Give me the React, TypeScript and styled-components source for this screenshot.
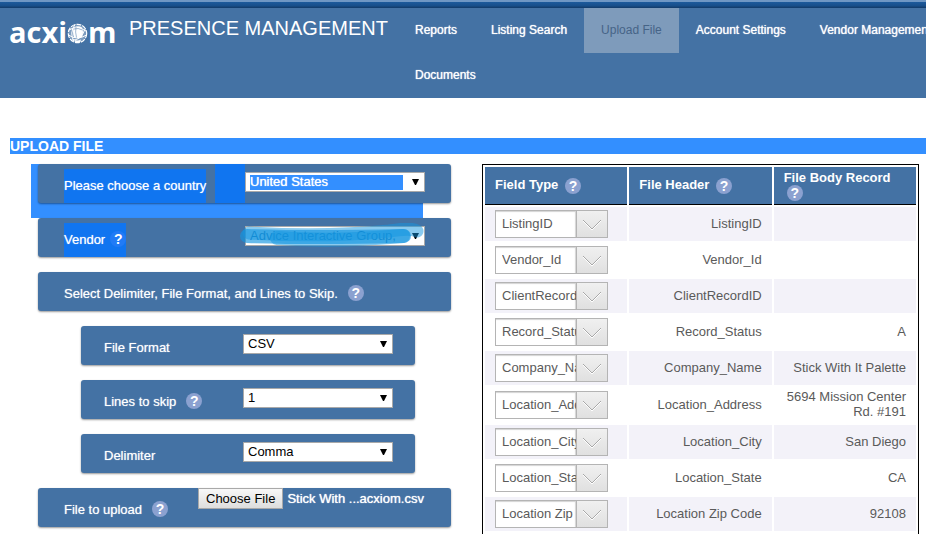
import React, { useId, useRef } from "react";
import styled, { createGlobalStyle, css } from "styled-components";

const BLUE = "#4472a4";
const SELECTION = "#338fff";
const SELECTION_ON_PANEL = "#1075f0";

const GlobalStyle = createGlobalStyle`
  *, *::before, *::after { box-sizing: border-box; }
  body {
    margin: 0;
    background: #fff;
    color: #5a5a5a;
    font: 13px/15px "Liberation Sans", Arial, sans-serif;
    overflow-x: hidden;
  }
  button, input, select { font: inherit; }
`;

/* ---------- Header ---------- */

const TopBar = styled.div`
  height: 8px;
  border-top: 2px solid #6f97c4;
  background: linear-gradient(#1c5a9c, #184f8b 60%, #123a68);
`;

const Header = styled.header`
  display: flex;
  align-items: flex-start;
  background: ${BLUE};
  color: #fff;
  overflow: hidden;
`;

const Brand = styled.a`
  display: flex;
  flex: 0 0 398px;
  padding: 8px 0 0 9px;
  color: #fff;
  text-decoration: none;
`;

const Logo = styled.span`
  display: flex;
  width: 120px;
  font: 700 29px/32px "Open Sans", "Noto Sans", sans-serif;

  svg {
    margin: 7px 0 0;
    flex: none;
  }
`;

const ProductName = styled.span`
  font-size: 20px;
  line-height: 24px;
  white-space: nowrap;
`;

const Nav = styled.nav`
  display: flex;
  flex-wrap: wrap;
  flex: 1 0 560px;
`;

const NavLink = styled.a<{ $active?: boolean }>`
  padding: 0 17px;
  font-size: 12px;
  line-height: 45px;
  white-space: nowrap;
  text-decoration: none;
  color: #fff;
  text-shadow: 0 0 1px #fff;
  ${(p) =>
    p.$active &&
    css`
      background: #7e9bbb;
      color: #466487;
      text-shadow: none;
    `}
`;

/* ---------- Page ---------- */

const Main = styled.main`
  padding: 40px 0 0 10px;
`;

const Title = styled.h1`
  margin: 0 0 10px;
  background: ${SELECTION};
  color: #fff;
  font-size: 14px;
  line-height: 16px;
`;

const Columns = styled.div`
  display: grid;
  grid-template-columns: minmax(0, 441fr) minmax(0, 437fr);
  column-gap: 31px;
  padding-right: 7px;
`;

const Form = styled.form`
  padding-left: 21px;
`;

const Row = styled.div<{ $nested?: boolean; $selected?: boolean }>`
  padding: ${(p) => (p.$nested ? "0 36px 15px 50px" : "0 0 15px 7px")};
  ${(p) =>
    p.$selected &&
    css`
      background: linear-gradient(${SELECTION}, ${SELECTION}) no-repeat left top /
        calc(100% - 28px) 100%;
    `}
`;

const Panel = styled.div<{ $nested?: boolean }>`
  display: flex;
  align-items: stretch;
  min-height: 39px;
  padding-left: ${(p) => (p.$nested ? 23 : 26)}px;
  border-radius: 3px;
  background: ${BLUE};
  box-shadow: 0 1px 2px rgba(0, 0, 0, 0.4);
  color: #fff;
`;

const LabelCell = styled.div<{ $width?: number }>`
  flex: ${(p) => (p.$width ? `0 0 ${p.$width}px` : "1")};
  display: flex;
  padding-top: 5px;
`;

const LabelText = styled.label<{ $selected?: boolean }>`
  display: flex;
  align-items: center;
  padding-bottom: 2px;
  white-space: nowrap;
  text-shadow: 0 0 1px rgba(255, 255, 255, 0.7);
  ${(p) =>
    p.$selected &&
    css`
      background: ${SELECTION_ON_PANEL};
    `}
`;

const ControlCell = styled.div<{ $selected?: boolean; $nested?: boolean }>`
  flex: 1;
  padding: 8px ${(p) => (p.$nested ? 22 : 26)}px 0 0;
  ${(p) =>
    !p.$nested &&
    css`
      padding-left: 30px;
    `}
  ${(p) =>
    p.$selected &&
    css`
      background: linear-gradient(${SELECTION_ON_PANEL}, ${SELECTION_ON_PANEL})
        no-repeat left top / 30px 100%;
    `}
`;

type HelpGap = "small" | "medium" | "large";
const HELP_GAPS: Record<HelpGap, number> = { small: 3, medium: 5, large: 10 };

const HelpButton = styled.button<{ $gap: HelpGap; $selected?: boolean }>`
  width: 16px;
  height: 16px;
  margin: 0 0 0 ${(p) => HELP_GAPS[p.$gap]}px;
  padding: 0;
  border: 0;
  border-radius: 50%;
  background: ${(p) => (p.$selected ? "#217bf6" : "#8ba1d0")};
  color: #fff;
  font-size: 14px;
  font-weight: bold;
  line-height: 16px;
  text-align: center;
  vertical-align: middle;
`;

const SelectBox = styled.div`
  position: relative;
  height: 20px;
`;

const NativeSelect = styled.select<{ $selected?: boolean; $muted?: boolean }>`
  appearance: none;
  display: block;
  width: 100%;
  height: 20px;
  padding: 0 22px 0 4px;
  border: 1px solid #a9a9a9;
  border-radius: 0;
  background: #fff;
  color: ${(p) => (p.$muted ? "#0b5f9c" : "#000")};
  line-height: 18px;
  ${(p) =>
    p.$selected &&
    css`
      background: linear-gradient(${SELECTION}, ${SELECTION}) no-repeat 4px 2px /
        calc(100% - 25px) 15px #fff;
      color: #fff;
      text-shadow: 0 0 1px #fff;
    `}
`;

const SelectArrow = styled.svg`
  position: absolute;
  top: 7px;
  right: 6px;
  pointer-events: none;
`;

const Scribble = styled.svg`
  position: absolute;
  top: -3px;
  left: -6px;
  pointer-events: none;
`;

const FileCell = styled.div`
  flex: 1;
  display: flex;
  align-items: flex-start;
  gap: 4px;
`;

const HiddenFile = styled.input`
  position: absolute;
  width: 1px;
  height: 1px;
  opacity: 0;
`;

const ChooseButton = styled.button`
  height: 21px;
  padding: 0 7px;
  border: 1px solid #a9a9a9;
  background: linear-gradient(#f8f8f8, #dddddd);
  color: #000;
  line-height: 19px;
  white-space: nowrap;
`;

const FileName = styled.span`
  line-height: 21px;
  white-space: nowrap;
  text-shadow: 0 0 1px #fff;
`;

/* ---------- Table ---------- */

const TableFrame = styled.div`
  border: 1px solid #000;
  padding-bottom: 36px;
  margin-bottom: -36px;
  min-width: 0;
`;

const Table = styled.table`
  width: 100%;
  table-layout: fixed;
  border-spacing: 2px;
  border-collapse: separate;
`;

const HeadCell = styled.th`
  height: 38px;
  padding: 2px 10px;
  border-bottom: 1px solid #000;
  background: ${BLUE};
  color: #fff;
  font-size: 13px;
  font-weight: bold;
  text-align: left;
`;

const BodyRow = styled.tr`
  &:nth-child(odd) td {
    background: #f3f2f9;
  }
`;

const Cell = styled.td`
  height: 34px;
  padding: 2px 10px 4px;
  text-align: right;
`;

const ComboCell = styled(Cell)`
  padding: 3px 10px;
`;

const Combo = styled.div`
  display: flex;
  width: 113px;
  max-width: 100%;
  height: 28px;
  border: 1px solid #b4b4b4;
`;

const ComboInput = styled.input`
  flex: 1;
  min-width: 0;
  padding: 0 0 2px 6px;
  border: 0;
  background: #fff;
  box-shadow: inset -1px 1px 1px #d4d4d4;
  color: #5a5a5a;
`;

const ComboButton = styled.button`
  flex: none;
  width: 31px;
  padding: 2px 0 0;
  border: 0;
  border-left: 1px solid #b4b4b4;
  background: linear-gradient(#f0f0f0, #e0e0e0);
  line-height: 0;
`;

/* ---------- Parts ---------- */

function Globe() {
  return (
    <svg width="21" height="21" viewBox="0 0 21 21" aria-hidden="true">
      <circle cx="10.5" cy="10.5" r="8.8" fill="#fff" fillOpacity="0.3" />
      <g fill="none" stroke="#fff">
        <circle cx="10.5" cy="10.5" r="9.2" strokeWidth="1.2" strokeDasharray="5 1" />
        <path d="M2 7Q10 2 19 8M1.500 12Q10 18 19.500 12M5 17Q14 18 18 6M8 1.500Q2 10 7 18.500" />
      </g>
      <path d="M7 4.500Q11 2 15 4.500Q17 9 15 14Q11 16 7 14Q5 9 7 4.500Z" fill="#fff" />
      <path d="M7.500 17Q11 18 14 16.500L13 19.500H8.500Z" fill="#fff" />
      <path d="M7 6Q11 4.500 15.500 7M9 4Q8 9 9.500 14.500" fill="none" stroke={BLUE} strokeWidth="0.5" />
    </svg>
  );
}

function Help({ gap, selected }: { gap: HelpGap; selected?: boolean }) {
  return (
    <HelpButton type="button" aria-label="Help" $gap={gap} $selected={selected}>
      ?
    </HelpButton>
  );
}

interface SelectProps {
  id: string;
  value: string;
  selected?: boolean;
  scribbled?: boolean;
}

function Select({ id, value, selected, scribbled }: SelectProps) {
  return (
    <SelectBox>
      <NativeSelect id={id} defaultValue={value} $selected={selected} $muted={scribbled}>
        <option>{value}</option>
      </NativeSelect>
      <SelectArrow width="7" height="6" viewBox="0 0 7 6" aria-hidden="true">
        <path d="M0 0H7L4 6H3Z" fill="#000" />
      </SelectArrow>
      {scribbled && (
        <Scribble width="187" height="25" viewBox="0 0 187 25" aria-hidden="true">
          <g fill="none" stroke="#1495e0" strokeLinecap="round" strokeLinejoin="round">
            <path d="M10 10C60 13 110 12 150 8C163 6 172 5 178 8" strokeWidth="13" opacity="0.5" />
            <path d="M8 13C40 14 80 15 165 13" strokeWidth="14" opacity="0.65" />
            <path d="M38 15C80 18 120 17 164 13" strokeWidth="14" opacity="0.5" />
          </g>
        </Scribble>
      )}
    </SelectBox>
  );
}

interface FieldProps extends Omit<SelectProps, "id"> {
  label: string;
  help?: HelpGap;
  nested?: boolean;
  labelSelected?: boolean;
}

function Field({ label, help, nested, selected, labelSelected, ...select }: FieldProps) {
  const id = useId();
  return (
    <Row $nested={nested} $selected={selected}>
      <Panel $nested={nested}>
        <LabelCell $width={nested ? 139 : 151}>
          <LabelText htmlFor={id} $selected={labelSelected}>
            {label}
            {help && <Help gap={help} selected={labelSelected} />}
          </LabelText>
        </LabelCell>
        <ControlCell $nested={nested} $selected={selected}>
          <Select id={id} selected={selected} {...select} />
        </ControlCell>
      </Panel>
    </Row>
  );
}

function FileField() {
  const id = useId();
  const input = useRef<HTMLInputElement>(null);
  return (
    <Row>
      <Panel>
        <LabelCell $width={134}>
          <LabelText htmlFor={id}>
            File to upload
            <Help gap="large" />
          </LabelText>
        </LabelCell>
        <FileCell>
          <HiddenFile id={id} ref={input} type="file" tabIndex={-1} />
          <ChooseButton type="button" onClick={() => input.current?.click()}>
            Choose File
          </ChooseButton>
          <FileName>Stick With ...acxiom.csv</FileName>
        </FileCell>
      </Panel>
    </Row>
  );
}

const NAV = ["Reports", "Listing Search", "Upload File", "Account Settings", "Vendor Management", "Documents"];
const HEADINGS = ["Field Type", "File Header", "File Body Record"];
const RECORDS: [string, string][] = [
  ["ListingID", ""],
  ["Vendor_Id", ""],
  ["ClientRecordID", ""],
  ["Record_Status", "A"],
  ["Company_Name", "Stick With It Palette"],
  ["Location_Address", "5694 Mission Center Rd. #191"],
  ["Location_City", "San Diego"],
  ["Location_State", "CA"],
  ["Location Zip Code", "92108"],
];

export default function App() {
  return (
    <>
      <GlobalStyle />
      <TopBar />
      <Header>
        <Brand href="#">
          <Logo>
            acxi
            <Globe />m
          </Logo>
          <ProductName>PRESENCE MANAGEMENT</ProductName>
        </Brand>
        <Nav>
          {NAV.map((item) => (
            <NavLink key={item} href="#" $active={item === "Upload File"}>
              {item}
            </NavLink>
          ))}
        </Nav>
      </Header>
      <Main>
        <Title>UPLOAD FILE</Title>
        <Columns>
          <Form>
            <Field label="Please choose a country" value="United States" selected labelSelected />
            <Field label="Vendor" value="Advice Interactive Group," help="medium" labelSelected scribbled />
            <Row>
              <Panel>
                <LabelCell>
                  <LabelText as="span">
                    Select Delimiter, File Format, and Lines to Skip.
                    <Help gap="large" />
                  </LabelText>
                </LabelCell>
              </Panel>
            </Row>
            <Field label="File Format" value="CSV" nested />
            <Field label="Lines to skip" value="1" nested help="large" />
            <Field label="Delimiter" value="Comma" nested />
            <FileField />
          </Form>
          <TableFrame>
            <Table>
              <thead>
                <tr>
                  {HEADINGS.map((heading) => (
                    <HeadCell key={heading} scope="col">
                      {heading} <Help gap="small" />
                    </HeadCell>
                  ))}
                </tr>
              </thead>
              <tbody>
                {RECORDS.map(([field, body]) => (
                  <BodyRow key={field}>
                    <ComboCell>
                      <Combo>
                        <ComboInput defaultValue={field} aria-label={`Field type for ${field}`} />
                        <ComboButton type="button" aria-label={`Choose field type for ${field}`}>
                          <svg width="20" height="12" viewBox="0 0 20 12" fill="none" aria-hidden="true">
                            <path d="M1 2L10 11L19 2" stroke="#fff" />
                            <path d="M1 1L10 10L19 1" stroke="#a8a8a8" />
                          </svg>
                        </ComboButton>
                      </Combo>
                    </ComboCell>
                    <Cell>{field}</Cell>
                    <Cell>{body}</Cell>
                  </BodyRow>
                ))}
              </tbody>
            </Table>
          </TableFrame>
        </Columns>
      </Main>
    </>
  );
}
